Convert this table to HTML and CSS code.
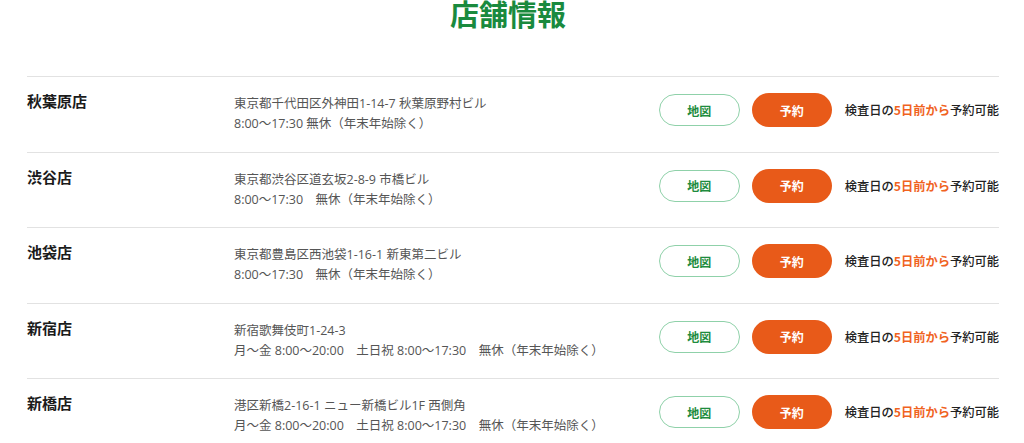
FILE: index.html
```html
<!DOCTYPE html>
<html lang="ja">
<head>
<meta charset="utf-8">
<link rel="stylesheet" href="styles.css">
</head>
<body>
<div class="page">
  <h1 class="title">店舗情報</h1>
  <ul class="shops">
    <li class="shop">
      <div class="shop-name">秋葉原店</div>
      <div class="shop-info">
        <p>東京都千代田区外神田1-14-7 秋葉原野村ビル</p>
        <p>8:00〜17:30 無休（年末年始除く）</p>
      </div>
      <div class="shop-actions">
        <a class="btn btn-map">地図</a>
        <a class="btn btn-reserve">予約</a>
        <span class="note">検査日の<em>5日前から</em>予約可能</span>
      </div>
    </li>
    <li class="shop">
      <div class="shop-name">渋谷店</div>
      <div class="shop-info">
        <p>東京都渋谷区道玄坂2-8-9 市橋ビル</p>
        <p>8:00〜17:30　無休（年末年始除く）</p>
      </div>
      <div class="shop-actions">
        <a class="btn btn-map">地図</a>
        <a class="btn btn-reserve">予約</a>
        <span class="note">検査日の<em>5日前から</em>予約可能</span>
      </div>
    </li>
    <li class="shop">
      <div class="shop-name">池袋店</div>
      <div class="shop-info">
        <p>東京都豊島区西池袋1-16-1 新東第二ビル</p>
        <p>8:00〜17:30　無休（年末年始除く）</p>
      </div>
      <div class="shop-actions">
        <a class="btn btn-map">地図</a>
        <a class="btn btn-reserve">予約</a>
        <span class="note">検査日の<em>5日前から</em>予約可能</span>
      </div>
    </li>
    <li class="shop">
      <div class="shop-name">新宿店</div>
      <div class="shop-info">
        <p>新宿歌舞伎町1-24-3</p>
        <p>月〜金 8:00〜20:00　土日祝 8:00〜17:30　無休（年末年始除く）</p>
      </div>
      <div class="shop-actions">
        <a class="btn btn-map">地図</a>
        <a class="btn btn-reserve">予約</a>
        <span class="note">検査日の<em>5日前から</em>予約可能</span>
      </div>
    </li>
    <li class="shop">
      <div class="shop-name">新橋店</div>
      <div class="shop-info">
        <p>港区新橋2-16-1 ニュー新橋ビル1F 西側角</p>
        <p>月〜金 8:00〜20:00　土日祝 8:00〜17:30　無休（年末年始除く）</p>
      </div>
      <div class="shop-actions">
        <a class="btn btn-map">地図</a>
        <a class="btn btn-reserve">予約</a>
        <span class="note">検査日の<em>5日前から</em>予約可能</span>
      </div>
    </li>
  </ul>
</div>
</body>
</html>
```

FILE: styles.css
```css
* { box-sizing: border-box; }
html, body { margin: 0; padding: 0; background: #fff; }
body {
  font-family: "Noto Sans CJK JP", "Noto Sans", sans-serif;
  color: #222;
  overflow: hidden;
}
.page {
  width: 972px;
  margin-left: 27px;
}
.title {
  margin: -5px 0 0;
  padding-right: 10px;
  text-align: center;
  font-size: 29px;
  line-height: 36px;
  font-weight: 700;
  color: #1a8a3e;
  height: 40px;
}
.shops {
  list-style: none;
  margin: 41px 0 0;
  padding: 0;
}
.shop {
  display: flex;
  align-items: flex-start;
  height: 75.5px;
  border-top: 1.5px solid #e2e2e2;
  padding-top: 14px;
}
.shop-name {
  width: 207px;
  flex: none;
  font-size: 15px;
  font-weight: 700;
  line-height: 20px;
  color: #1b1b1b;
}
.shop-info {
  flex: 1;
  padding-top: 3px;
  font-family: "Open Sans", "Noto Sans CJK JP", sans-serif;
  font-size: 12.5px;
  line-height: 20px;
  color: #555;
}
.shop-info p { margin: 0; }
.shop-actions {
  display: flex;
  align-items: center;
  padding-top: 2px;
}
.btn {
  display: flex;
  align-items: center;
  justify-content: center;
  width: 81px;
  border-radius: 17px;
  font-size: 12px;
  font-weight: 700;
  text-decoration: none;
}
.btn-map {
  height: 32px;
  border: 1.5px solid #8fd1a9;
  color: #1e8c3e;
  background: #fff;
}
.btn-reserve {
  height: 34px;
  width: 80px;
  margin-left: 12px;
  background: #e85a19;
  color: #fff;
}
.note {
  margin-left: 13px;
  font-size: 12.25px;
  font-weight: 500;
  color: #222;
  white-space: nowrap;
}
.note em {
  font-style: normal;
  font-weight: 700;
  color: #f0631f;
}
```
